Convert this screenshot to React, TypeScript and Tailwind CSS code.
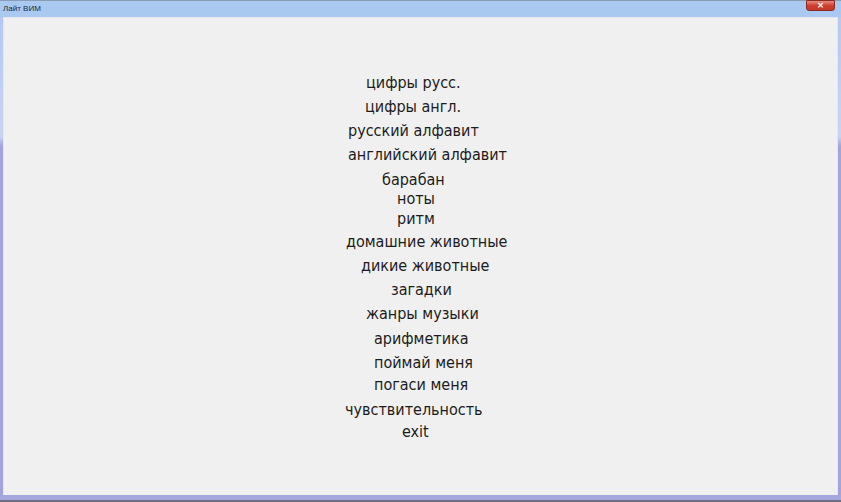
import React from "react";

const items: { t: string; ml: string; mt: string }[] = [
  { t: "цифры русс.", ml: "ml-[362px]", mt: "mt-[56px]" },
  { t: "цифры англ.", ml: "ml-[361px]", mt: "mt-[6px]" },
  { t: "русский алфавит", ml: "ml-[344px]", mt: "mt-[6px]" },
  { t: "английский алфавит", ml: "ml-[344px]", mt: "mt-[6px]" },
  { t: "барабан", ml: "ml-[378px]", mt: "mt-[7px]" },
  { t: "ноты", ml: "ml-[393px]", mt: "mt-[1px]" },
  { t: "ритм", ml: "ml-[393px]", mt: "mt-[2px]" },
  { t: "домашние животные", ml: "ml-[342px]", mt: "mt-[5px]" },
  { t: "дикие животные", ml: "ml-[357px]", mt: "mt-[6px]" },
  { t: "загадки", ml: "ml-[387px]", mt: "mt-[6px]" },
  { t: "жанры музыки", ml: "ml-[362px]", mt: "mt-[6px]" },
  { t: "арифметика", ml: "ml-[370px]", mt: "mt-[7px]" },
  { t: "поймай меня", ml: "ml-[370px]", mt: "mt-[6px]" },
  { t: "погаси меня", ml: "ml-[370px]", mt: "mt-[4px]" },
  { t: "чувствительность", ml: "ml-[341px]", mt: "mt-[7px]" },
  { t: "exit", ml: "ml-[398px]", mt: "mt-[4px]" },
];

export default function App() {
  return (
    <div className="w-[841px] h-[502px] flex flex-col bg-[#a9c9f0] overflow-hidden">
      <div className="h-px bg-[#8a9db5]" />
      <div className="h-[16px] flex items-start justify-between bg-[#a9c9f0]">
        <span
          className="ml-[3px] mt-[3px] text-[8px] leading-[9px] text-[#1a2a44]"
          style={{ fontFamily: '"Liberation Sans", Arial, sans-serif' }}
        >
          Лайт ВИМ
        </span>
        <div className="mr-[6px] w-[29px] h-[11px] -mt-px rounded-b-[3px] bg-gradient-to-b from-[#e88a80] via-[#cf3e30] to-[#c0392b] border border-[#8c2a22] flex items-center justify-center">
          <span
            className="text-white text-[9px] leading-[9px] font-bold"
            style={{ fontFamily: '"DejaVu Sans", sans-serif' }}
          >
            ×
          </span>
        </div>
      </div>
      <div className="flex flex-1">
        <div className="w-[3px] bg-gradient-to-b from-[#b4c8f2] via-[#c8d4f4] via-[25%] to-[#a4a4dc] to-[27%]" />
        <div className="flex-1 bg-[#f0f0f0] flex flex-col items-start border-l border-t border-r border-[#e6e6ee]">
          {items.map((it) => (
            <div
              key={it.t}
              className={`${it.ml} ${it.mt} text-[16px] leading-[18px] text-[#1c1c1c] whitespace-nowrap`}
              style={{ fontFamily: '"DejaVu Sans Condensed", "DejaVu Sans", sans-serif', fontStretch: "condensed" }}
            >
              {it.t}
            </div>
          ))}
        </div>
        <div className="w-[3px] bg-gradient-to-b from-[#b4c8f2] via-[#c8d4f4] via-[25%] to-[#a4a4dc] to-[27%]" />
      </div>
      <div className="h-[5px] bg-[#a6a6de]" />
      <div className="h-[2px] bg-[#6e6e80]" />
    </div>
  );
}
